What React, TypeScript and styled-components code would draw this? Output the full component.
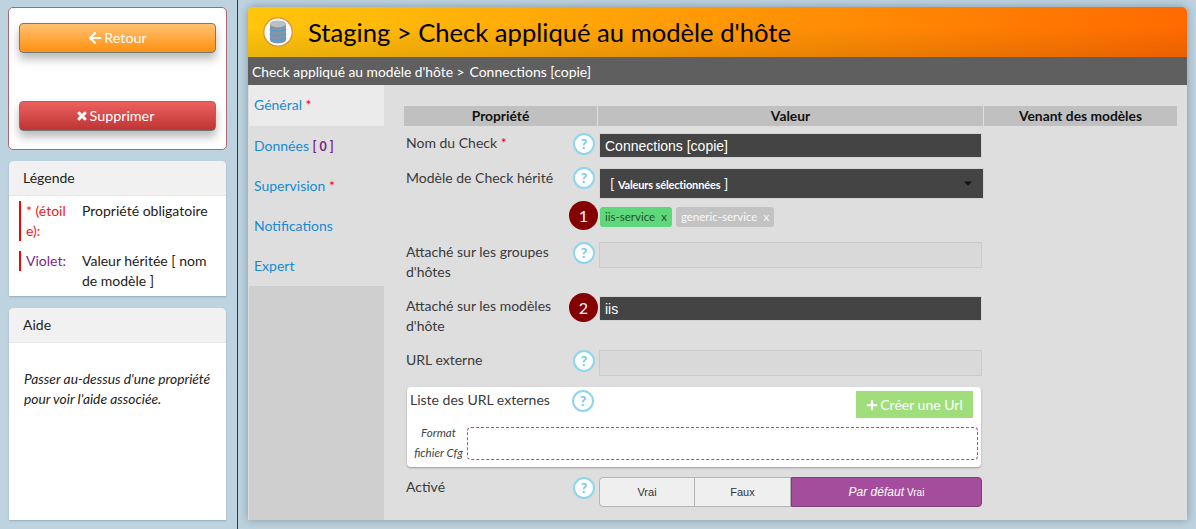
import React from 'react'
import styled, { createGlobalStyle } from 'styled-components'
import { FaArrowLeft, FaCaretDown, FaPlus, FaTimes } from 'react-icons/fa'

const GlobalStyle = createGlobalStyle`
  html, body {
    margin: 0;
    padding: 0;
    height: 529px;
    overflow: hidden;
    background: #bdd3e0;
    font-family: Lato, "Open Sans", sans-serif;
    font-size: 14px;
    color: #222;
  }
  * { box-sizing: border-box; }
`

const Page = styled.div`
  display: flex;
  height: 529px;
  width: 1196px;
`

const Sidebar = styled.div`
  width: 238px;
  height: 529px;
  border-right: 1px solid #2b3a44;
  padding: 7px 0 0 8px;
  display: flex;
  flex-direction: column;
`

const ActionCard = styled.div`
  width: 219px;
  height: 143px;
  background: #fff;
  border: 1px solid #a86a6e;
  border-radius: 5px;
  padding: 15px 10px 0;
  display: flex;
  flex-direction: column;
  gap: 48px;
`

const ActionButton = styled.div<{ $tone: 'orange' | 'red' }>`
  height: 30px;
  padding: 0 ${({ $tone }) => ($tone === 'red' ? 5 : 0)}px 1px 0;
  border: 1px solid #777;
  border-radius: 4px;
  color: #fff;
  display: flex;
  align-items: center;
  justify-content: center;
  gap: 2px;
  font-size: 14.3px;
  box-shadow: 0 6px 10px rgba(0, 0, 0, 0.28);
  background: ${({ $tone }) =>
    $tone === 'orange'
      ? 'linear-gradient(#ffc272, #ff9110)'
      : 'linear-gradient(#ec6160, #bd3533)'};
`

const ChunkyCross = styled(FaTimes)`
  stroke: currentColor;
  stroke-width: 40;
`

const Card = styled.div<{ $height: number; $top: number }>`
  width: 217px;
  height: ${({ $height }) => $height}px;
  margin: ${({ $top }) => $top}px 0 0 1px;
  background: #fff;
  border-radius: 5px 5px 0 0;
  box-shadow: 0 1px 2px rgba(0, 0, 0, 0.2);
  overflow: hidden;
`

const CardTitle = styled.div`
  height: 35px;
  line-height: 34px;
  padding-left: 14px;
  background: #f1f1f1;
  border-bottom: 1px solid #e6e6e6;
`

const LegendBody = styled.div`
  padding: 5px 10px 0;
  display: flex;
  flex-direction: column;
  gap: 10px;
`

const LegendRow = styled.div`
  display: flex;
  align-items: flex-start;
  line-height: 20px;
`

const LegendKey = styled.div<{ $color: string }>`
  width: 56px;
  flex: none;
  padding-left: 5px;
  border-left: 2px solid #f00;
  color: ${({ $color }) => $color};
  word-break: break-all;
`

const LegendValue = styled.div`
  padding-left: 7px;
`

const HelpText = styled.div`
  padding: 26px 15px 0;
  font-style: italic;
  font-size: 13.8px;
  line-height: 20px;
`

const Main = styled.div`
  width: 939px;
  height: 513px;
  margin: 7px 0 0 10px;
  border-radius: 5px 5px 0 0;
  background: #dedede;
  box-shadow: 0 0 10px rgba(0, 0, 0, 0.3);
  display: flex;
  flex-direction: column;
  overflow: hidden;
`

const TitleBar = styled.div`
  height: 50px;
  flex: none;
  padding-left: 15px;
  display: flex;
  align-items: center;
  gap: 15px;
  font-size: 25.6px;
  color: #000;
  background: linear-gradient(to bottom, rgba(0, 0, 0, 0) 40%, rgba(0, 0, 0, 0.09)),
    linear-gradient(to right, #ffc60b, #ff6a00);
`

const SubBar = styled.div`
  height: 28px;
  flex: none;
  padding-left: 4px;
  display: flex;
  align-items: center;
  gap: 5px;
  background: #5f5f5f;
  color: #fff;
  font-size: 13.8px;
`

const SubName = styled.span`
  font-size: 14px;
`

const Columns = styled.div`
  flex: 1;
  display: flex;
  min-height: 0;
  padding-left: 1px;
`

const Tabs = styled.div`
  width: 135px;
  flex: none;
  background: #cfcfcf;
  display: flex;
  flex-direction: column;
  align-self: stretch;
`

const Tab = styled.div<{ $active?: boolean }>`
  height: ${({ $active }) => ($active ? 41 : 40)}px;
  padding-left: 5px;
  line-height: 40px;
  color: #1a8ad0;
  background: ${({ $active }) => ($active ? '#ebebeb' : '#dedede')};
`

const Star = styled.span`
  color: #f00;
`

const Count = styled.span`
  color: #7a1f8c;
  font-size: 12.5px;
  font-weight: 700;
`

const Form = styled.div`
  flex: 1;
  padding: 21px 10px 0 20px;
`

const HeadRow = styled.div`
  display: grid;
  grid-template-columns: 193px 385px 193px;
  gap: 1px;
  margin-bottom: 1px;
`

const HeadCell = styled.div`
  height: 20px;
  line-height: 20px;
  background: #c0c0c0;
  text-align: center;
  font-size: 13.8px;
  font-weight: 700;
  color: #111;
`

const Row = styled.div<{ $height: number }>`
  position: relative;
  display: flex;
  align-items: flex-start;
  height: ${({ $height }) => $height}px;
`

const Label = styled.div<{ $top: number }>`
  width: 169px;
  flex: none;
  padding: ${({ $top }) => $top}px 0 0 2px;
  line-height: 20px;
  color: #3a3a3a;
`

const Help = styled.div<{ $top?: number }>`
  width: 22px;
  height: 22px;
  flex: none;
  margin-top: ${({ $top }) => $top ?? 0}px;
  border-radius: 50%;
  border: 2px solid #8ed6ee;
  background: #fff;
  color: #72c9e8;
  font-weight: 700;
  font-size: 14px;
  line-height: 18px;
  text-align: center;
`

const TextBox = styled.div<{ $top: number; $height: number; $dark?: boolean }>`
  width: 383px;
  height: ${({ $height }) => $height}px;
  margin: ${({ $top }) => $top}px 0 0 4px;
  padding: 1px 0 0 5px;
  font-family: 'Liberation Sans', Arial, sans-serif;
  font-size: 14px;
  line-height: ${({ $height }) => $height - 2}px;
  color: #fff;
  border: 1px solid ${({ $dark }) => ($dark ? '#d4d4d4' : '#cbcbcb')};
  background: ${({ $dark }) => ($dark ? '#444' : '#d9d9d9')};
`

const SelectColumn = styled.div`
  margin: 3px 0 0 4px;
  width: 385px;
  display: flex;
  flex-direction: column;
`

const SelectBox = styled.div`
  height: 31px;
  padding: 0 9px 1px 10px;
  display: flex;
  align-items: center;
  justify-content: space-between;
  color: #fff;
  background: #444;
  border: 1px solid #d4d4d4;
  font-size: 14px;
`

const SelectHint = styled.span`
  font-size: 11px;
  font-weight: 700;
  letter-spacing: -0.15px;
`

const CaretIcon = styled(FaCaretDown)`
  color: #111;
  width: 12px;
  height: 12px;
`

const Tags = styled.div`
  display: flex;
  gap: 4px;
  margin-top: 8px;
  padding-left: 1px;
`

const Tag = styled.div<{ $inherited?: boolean }>`
  height: 20px;
  padding: 0 5px 1px;
  display: flex;
  align-items: center;
  gap: 6px;
  border-radius: 3px;
  font-size: 11.5px;
  color: ${({ $inherited }) => ($inherited ? '#f8f8f8' : '#1f5230')};
  background: ${({ $inherited }) => ($inherited ? '#c3c3c3' : '#5fd87c')};
`

const Badge = styled.div<{ $top: number }>`
  position: absolute;
  left: 165px;
  top: ${({ $top }) => $top}px;
  width: 29px;
  height: 29px;
  border-radius: 50%;
  background: #850000;
  color: #fff;
  font-size: 16px;
  line-height: 29px;
  text-align: center;
`

const UrlPanel = styled.div`
  width: 574px;
  height: 80px;
  margin-left: 3px;
  padding: 3px 3px 0;
  background: #fff;
  border-radius: 4px;
  box-shadow: 0 1px 2px rgba(0, 0, 0, 0.3);
  display: flex;
  flex-direction: column;
`

const UrlTop = styled.div`
  display: flex;
  align-items: flex-start;
  height: 37px;
`

const UrlLabel = styled.div`
  width: 162px;
  flex: none;
  line-height: 20px;
  color: #3a3a3a;
`

const CreateButton = styled.div`
  margin: 1px 5px 0 auto;
  width: 117px;
  height: 27px;
  background: #a0de7b;
  color: #fff;
  display: flex;
  align-items: center;
  justify-content: center;
  gap: 2px;
`

const UrlBottom = styled.div`
  display: flex;
`

const FormatLabel = styled.div`
  width: 57px;
  flex: none;
  margin-top: -4px;
  font-size: 11.6px;
  font-style: italic;
  line-height: 20px;
  text-align: center;
  color: #444;
`

const DashedBox = styled.div`
  flex: 1;
  height: 33px;
  border: 1px dashed #a64d9c;
  border-radius: 4px;
`

const ToggleGroup = styled.div`
  margin: 10px 0 0 4px;
  width: 383px;
  height: 30px;
  display: flex;
  font-family: 'Liberation Sans', Arial, sans-serif;
  font-size: 11px;
`

const ToggleOption = styled.div<{ $first?: boolean }>`
  width: 96px;
  border: 1px solid #b4b4b4;
  border-left-width: ${({ $first }) => ($first ? 1 : 0)}px;
  border-radius: ${({ $first }) => ($first ? '4px 0 0 4px' : '0')};
  background: #efefef;
  color: #333;
  display: flex;
  align-items: center;
  justify-content: center;
`

const ToggleDefault = styled.div`
  flex: 1;
  border: 1px solid #7d3f78;
  border-radius: 0 4px 4px 0;
  background: #a34d9c;
  color: #fff;
  font-size: 10px;
  display: flex;
  align-items: center;
  justify-content: center;
  gap: 3px;
`

const DefaultWord = styled.i`
  font-size: 12px;
`

const DatabaseIcon = () => (
  <svg width="30" height="30" viewBox="0 0 30 30">
    <circle cx="15" cy="15" r="14.2" fill="#fff" stroke="#d9903a" strokeWidth="1.2" />
    <path d="M7 7c0-4.5 16-4.5 16 0v16c0 4.5-16 4.5-16 0z" fill="#8b949c" />
    <ellipse cx="15" cy="7" rx="8" ry="3.2" fill="#b9c0c6" />
    <path
      d="M7 12c2 3 14 3 16 0M7 16.500c2 3 14 3 16 0M7 21c2 3 14 3 16 0"
      fill="none"
      stroke="#4f9fdc"
      strokeWidth="1.6"
    />
  </svg>
)

const App: React.FC = () => (
  <Page>
    <GlobalStyle />
    <Sidebar>
      <ActionCard>
        <ActionButton $tone="orange">
          <FaArrowLeft size={14} /> Retour
        </ActionButton>
        <ActionButton $tone="red">
          <ChunkyCross size={12} /> Supprimer
        </ActionButton>
      </ActionCard>
      <Card $height={135} $top={11}>
        <CardTitle>Légende</CardTitle>
        <LegendBody>
          <LegendRow>
            <LegendKey $color="#f02020">* (étoile):</LegendKey>
            <LegendValue>Propriété obligatoire</LegendValue>
          </LegendRow>
          <LegendRow>
            <LegendKey $color="#7a1f8c">Violet:</LegendKey>
            <LegendValue>Valeur héritée [ nom de modèle ]</LegendValue>
          </LegendRow>
        </LegendBody>
      </Card>
      <Card $height={212} $top={12}>
        <CardTitle>Aide</CardTitle>
        <HelpText>Passer au-dessus d'une propriété pour voir l'aide associée.</HelpText>
      </Card>
    </Sidebar>
    <Main>
      <TitleBar>
        <DatabaseIcon />
        Staging &gt; Check appliqué au modèle d'hôte
      </TitleBar>
      <SubBar>
        Check appliqué au modèle d'hôte &gt;
        <SubName>Connections [copie]</SubName>
      </SubBar>
      <Columns>
        <Tabs>
          <Tab $active>
            Général <Star>*</Star>
          </Tab>
          <Tab>
            Données <Count>[ 0 ]</Count>
          </Tab>
          <Tab>
            Supervision <Star>*</Star>
          </Tab>
          <Tab>Notifications</Tab>
          <Tab>Expert</Tab>
        </Tabs>
        <Form>
          <HeadRow>
            <HeadCell>Propriété</HeadCell>
            <HeadCell>Valeur</HeadCell>
            <HeadCell>Venant des modèles</HeadCell>
          </HeadRow>
          <Row $height={38}>
            <Label $top={6}>
              Nom du Check <Star>*</Star>
            </Label>
            <Help $top={6}>?</Help>
            <TextBox $top={6} $height={25} $dark>
              Connections [copie]
            </TextBox>
          </Row>
          <Row $height={70}>
            <Label $top={3}>Modèle de Check hérité</Label>
            <Help $top={2}>?</Help>
            <SelectColumn>
              <SelectBox>
                <span>
                  [ <SelectHint>Valeurs sélectionnées</SelectHint> ]
                </span>
                <CaretIcon />
              </SelectBox>
              <Tags>
                <Tag>
                  iis-service <span>x</span>
                </Tag>
                <Tag $inherited>
                  generic-service <span>x</span>
                </Tag>
              </Tags>
            </SelectColumn>
            <Badge $top={36}>1</Badge>
          </Row>
          <Row $height={54}>
            <Label $top={7}>Attaché sur les groupes d'hôtes</Label>
            <Help $top={7}>?</Help>
            <TextBox $top={7} $height={26} />
          </Row>
          <Row $height={54}>
            <Label $top={7}>Attaché sur les modèles d'hôte</Label>
            <Help $top={7}>?</Help>
            <TextBox $top={7} $height={25} $dark>
              iis
            </TextBox>
            <Badge $top={4}>2</Badge>
          </Row>
          <Row $height={44}>
            <Label $top={7}>URL externe</Label>
            <Help $top={7}>?</Help>
            <TextBox $top={7} $height={26} />
          </Row>
          <UrlPanel>
            <UrlTop>
              <UrlLabel>Liste des URL externes</UrlLabel>
              <Help>?</Help>
              <CreateButton>
                <FaPlus size={12} /> Créer une Url
              </CreateButton>
            </UrlTop>
            <UrlBottom>
              <FormatLabel>Format fichier Cfg</FormatLabel>
              <DashedBox />
            </UrlBottom>
          </UrlPanel>
          <Row $height={44}>
            <Label $top={10}>Activé</Label>
            <Help $top={10}>?</Help>
            <ToggleGroup>
              <ToggleOption $first>Vrai</ToggleOption>
              <ToggleOption>Faux</ToggleOption>
              <ToggleDefault>
                <DefaultWord>Par défaut</DefaultWord> Vrai
              </ToggleDefault>
            </ToggleGroup>
          </Row>
        </Form>
      </Columns>
    </Main>
  </Page>
)

export default App
